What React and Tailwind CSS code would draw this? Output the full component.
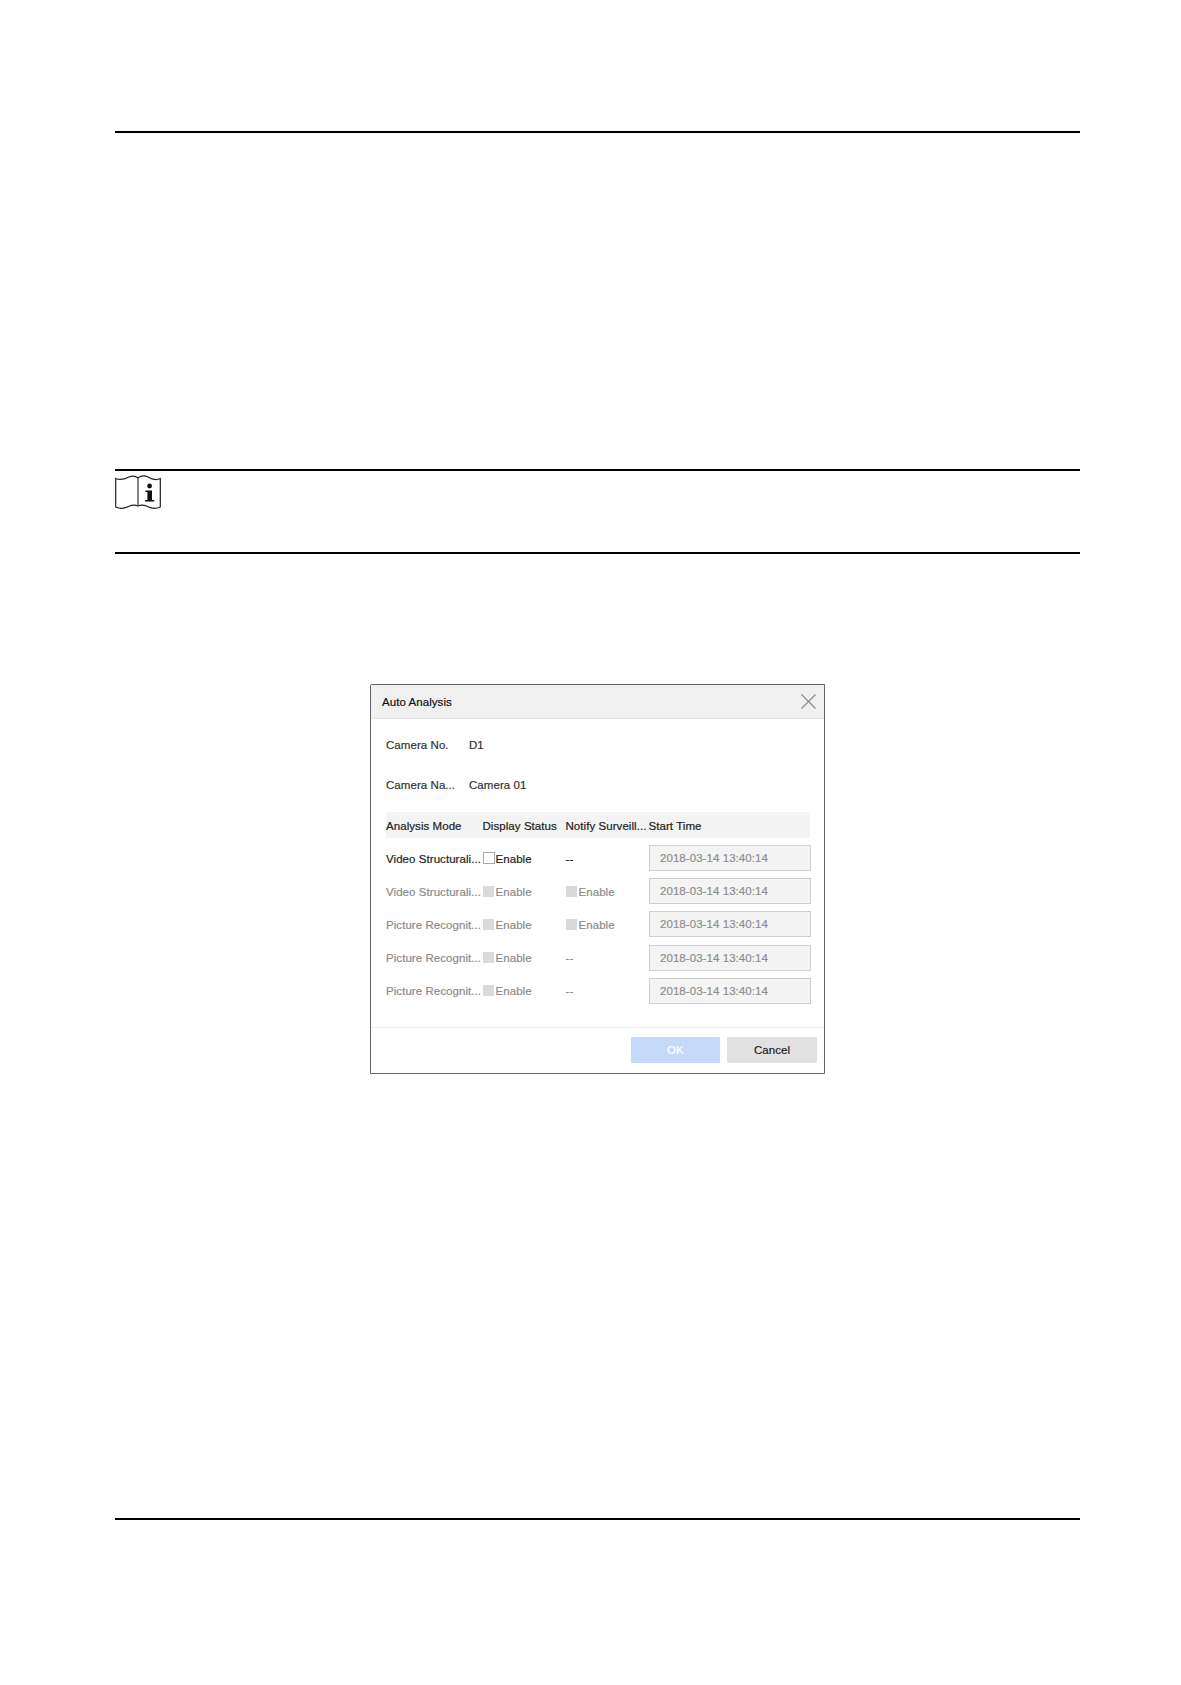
import React from 'react';

// --- Table data ---
const rows = [
  { mode: 'Video Structurali...', notify: false, active: true },
  { mode: 'Video Structurali...', notify: true, active: false },
  { mode: 'Picture Recognit...', notify: true, active: false },
  { mode: 'Picture Recognit...', notify: false, active: false },
  { mode: 'Picture Recognit...', notify: false, active: false },
];

const startTime = '2018-03-14 13:40:14';

const NoteIcon = () => (
  <svg width="47" height="36" viewBox="0 0 47 36" fill="none" className="block">
    <path
      d="M.7 3.5C5 5.5 9 4.5 14 2C17.5 .4 20 .8 23 2.8C26 .8 29.5 .4 33 2C37 4.5 41 5.5 45.3 3.5V32C40.5 34.3 36.5 33.5 32.5 31.5C28.5 29.7 26 29.5 23 31C19.5 29.5 17.5 29.7 13.5 31.5C9.5 33.5 5.5 34.3 .7 32Z"
      stroke="#222"
      strokeWidth="1.2"
    />
    <path d="M23 2.8V31" stroke="#444" strokeWidth="1.3" />
    <circle cx="34.6" cy="11" r="2.4" fill="#111" />
    <path d="M30.4 15.5H37V25H39.3V26.5H30V25H32.4V17H30.4Z" fill="#111" />
  </svg>
);

const CheckOption = ({ active }) => (
  <div className="flex items-center pt-px">
    <span
      className={
        active
          ? 'w-[12px] h-[12px] -mt-px border border-[#a8a8a8] bg-white'
          : 'w-[11px] h-[11px] -mt-px mr-px bg-[#dadada]'
      }
    />
    <span className="ml-px">Enable</span>
  </div>
);

const AnalysisRow = ({ mode, notify, active }) => (
  <div
    className={`grid grid-cols-[96.5px_83px_83px_162px] items-center h-[33.2px] ${
      active ? 'text-[#222]' : 'text-[#8b8b8b]'
    }`}
  >
    <span className="pt-px">{mode}</span>
    <CheckOption active={active} />
    {notify ? <CheckOption active={false} /> : <span className="pt-px">--</span>}
    <div className="h-[26px] border border-[#cfcfcf] bg-[#f4f4f4] pl-[10.5px] flex items-center text-[#8e8e8e]">
      {startTime}
    </div>
  </div>
);

const AutoAnalysisDialog = () => (
  <div className="w-[455px] h-[390px] ml-[255px] border border-[#666] rounded-tl-[2px] bg-white flex flex-col text-[11.5px] leading-[14px] tracking-[0.06px] [-webkit-text-stroke:0.2px] text-[#333] whitespace-nowrap">
    {/* Title bar */}
    <div className="h-[34px] shrink-0 bg-[#f0f0f0] border-b border-[#e2e2e2] flex items-center justify-between pl-[11px] pr-[8.5px]">
      <span className="text-[#111]">Auto Analysis</span>
      <svg width="15" height="15" viewBox="0 0 15 15" fill="none">
        <path d="M.5 .5L14.5 14.5M14.5 .5L.5 14.5" stroke="#8c8c8c" strokeWidth="1.2" />
      </svg>
    </div>

    {/* Camera info */}
    <div className="pl-[15px] pt-[19px]">
      <div className="flex">
        <span className="w-[83px]">Camera No.</span>
        <span>D1</span>
      </div>
      <div className="flex mt-[26px]">
        <span className="w-[83px]">Camera Na...</span>
        <span>Camera 01</span>
      </div>
    </div>

    {/* Analysis table */}
    <div className="ml-[15px] mt-[20px] w-[424px]">
      <div className="grid grid-cols-[96.5px_83px_83px_161px] items-center h-[26px] pt-px bg-[#f4f4f4] text-[#222]">
        <span>Analysis Mode</span>
        <span>Display Status</span>
        <span>Notify Surveill...</span>
        <span>Start Time</span>
      </div>
      <div className="pt-[3.5px]">
        {rows.map((row, i) => (
          <AnalysisRow key={i} {...row} />
        ))}
      </div>
    </div>

    {/* Buttons */}
    <div className="mt-auto h-[46px] border-t border-[#efefef] flex justify-end gap-[7px] pt-[9px] pr-[7px]">
      <button className="w-[89.5px] h-[26px] bg-[#c5d9f8] text-white rounded-[1px]">OK</button>
      <button className="w-[90px] h-[26px] bg-[#e1e1e1] text-[#222] rounded-[1px]">Cancel</button>
    </div>
  </div>
);

const App = () => {
  return (
    <div className="w-[1181px] h-[1685px] bg-white pt-[131px] pl-[115px] font-['Liberation_Sans',Arial,sans-serif]">
      <div className="w-[965px] h-[1389px] border-y-2 border-black pt-[336px]">
        {/* Note box */}
        <div className="h-[85px] border-y-2 border-black pt-[4px]">
          <NoteIcon />
        </div>
        <div className="mt-[130px]">
          <AutoAnalysisDialog />
        </div>
      </div>
    </div>
  );
};

export default App;
